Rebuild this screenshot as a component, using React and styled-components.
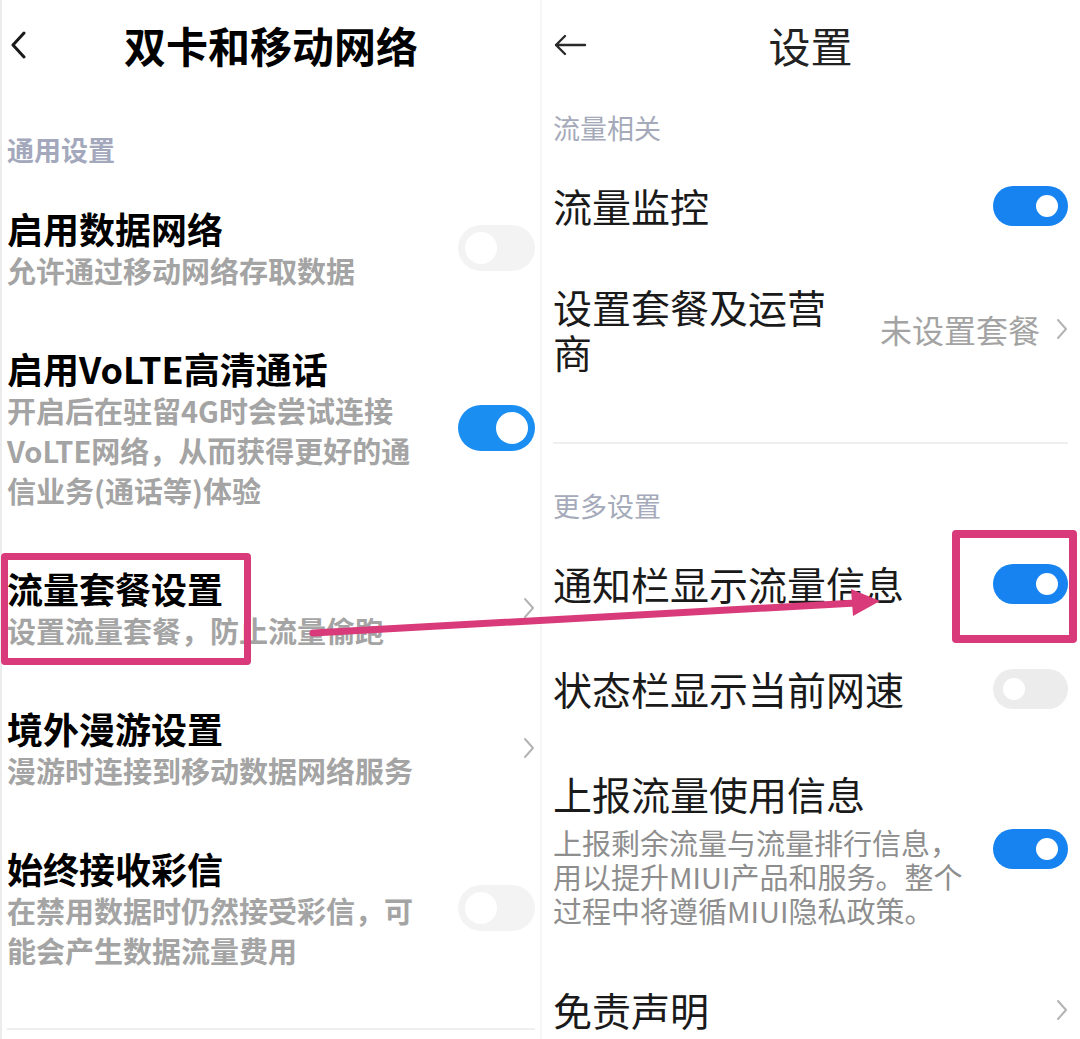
import styled, { createGlobalStyle } from 'styled-components';

const pink = '#d93a7a';

const GlobalStyle = createGlobalStyle`
  html, body {
    margin: 0;
    padding: 0;
    background: #fff;
  }
  body {
    font-family: "Noto Sans CJK SC", "Noto Sans", sans-serif;
  }
`;

const Page = styled.div`
  position: relative;
  display: flex;
  width: 1080px;
  height: 1039px;
  overflow: hidden;
  background: #fff;
`;

const Screen = styled.div`
  width: 540px;
  flex: none;
  box-sizing: border-box;
  padding: ${(p) => (p.$bold ? '0 5px 0 5px' : '0 12px 0 11px')};
  border-left: 2px solid ${(p) => (p.$bold ? '#ececec' : '#f6f6f6')};
  font-weight: ${(p) => (p.$bold ? 700 : 400)};
`;

const Header = styled.div`
  height: 94px;
  box-sizing: border-box;
  padding-bottom: 5px;
  display: grid;
  grid-template-columns: 1fr auto 1fr;
  align-items: center;
`;

const BackButton = styled.div`
  display: flex;
  align-items: center;
  padding-left: ${(p) => p.$offset}px;
`;

const Title = styled.h1`
  margin: 0;
  font-size: 42px;
  line-height: 50px;
  font-weight: inherit;
  color: ${(p) => (p.$bold ? '#000' : '#222')};
`;

const SectionLabel = styled.div`
  margin-top: ${(p) => p.$top}px;
  padding-bottom: ${(p) => p.$bottom}px;
  font-size: 27px;
  line-height: 36px;
  font-weight: ${(p) => (p.$bold ? 700 : 400)};
  color: ${(p) => (p.$bold ? '#a3a8bc' : '#a5aaba')};
`;

const Row = styled.div`
  display: flex;
  align-items: center;
  gap: 16px;
  padding: ${(p) => p.$pad}px 0;
`;

const TextBlock = styled.div`
  flex: 1;
  min-width: 0;
`;

const RowTitle = styled.div`
  white-space: pre-line;
  font-size: ${(p) => (p.$bold ? 36 : 39)}px;
  line-height: ${(p) => (p.$bold ? 44 : 45)}px;
  color: ${(p) => (p.$bold ? '#000' : '#1a1a1a')};
`;

const RowSub = styled.div`
  white-space: pre-line;
  font-size: 29px;
  margin-top: ${(p) => (p.$bold ? 0 : 9)}px;
  line-height: ${(p) => (p.$bold ? 40 : 34)}px;
  font-weight: ${(p) => (p.$bold ? 700 : 400)};
  color: ${(p) => (p.$bold ? '#a4a4a4' : '#8e8e8e')};
`;

const Value = styled.span`
  font-size: 32px;
  line-height: 45px;
  color: #a3a3a3;
`;

const Trailing = styled.div`
  display: flex;
  align-items: center;
  gap: 16px;
  flex: none;
`;

const Switch = styled.span`
  flex: none;
  display: flex;
  align-items: center;
  box-sizing: border-box;
  justify-content: ${(p) => (p.$on ? 'flex-end' : 'flex-start')};
  width: ${(p) => (p.$large ? 77 : 75)}px;
  height: ${(p) => (p.$large ? 46 : 40)}px;
  border-radius: 23px;
  padding: 0 ${(p) => (p.$large ? 7 : 10)}px;
  background: ${(p) =>
    p.$on ? (p.$large ? '#1b8ef2' : '#1683f1') : p.$large ? '#f3f3f3' : '#ececec'};
`;

const Knob = styled.span`
  width: ${(p) => (p.$large ? 32 : 22)}px;
  height: ${(p) => (p.$large ? 32 : 22)}px;
  border-radius: 50%;
  background: #fff;
`;

const Divider = styled.div`
  height: 2px;
  margin-top: ${(p) => p.$top}px;
  background: #efefef;
`;

const Annotation = styled.div`
  position: absolute;
  box-sizing: border-box;
  border: ${(p) => p.$border}px solid ${pink};
  border-radius: 4px;
`;

const ArrowLayer = styled.svg`
  position: absolute;
  left: 0;
  top: 0;
  pointer-events: none;
`;

const Chevron = () => (
  <svg width="12" height="22" viewBox="0 0 12 22">
    <path d="M2 2 L10 11 L2 20" fill="none" stroke="#b3b3b3" strokeWidth="2" strokeLinecap="round" strokeLinejoin="round" />
  </svg>
);

const Toggle = ({ on, large }) => (
  <Switch $on={on} $large={large}>
    <Knob $large={large} />
  </Switch>
);

const leftRows = [
  { title: '启用数据网络', sub: '允许通过移动网络存取数据', toggle: false },
  {
    title: '启用VoLTE高清通话',
    sub: '开启后在驻留4G时会尝试连接\nVoLTE网络，从而获得更好的通\n信业务(通话等)体验',
    toggle: true,
  },
  { title: '流量套餐设置', sub: '设置流量套餐，防止流量偷跑', arrow: true },
  { title: '境外漫游设置', sub: '漫游时连接到移动数据网络服务', arrow: true },
  { title: '始终接收彩信', sub: '在禁用数据时仍然接受彩信，可\n能会产生数据流量费用', toggle: false },
];

const trafficRows = [
  { title: '流量监控', toggle: true },
  { title: '设置套餐及运营\n商', value: '未设置套餐', arrow: true },
];

const moreRows = [
  { title: '通知栏显示流量信息', toggle: true },
  { title: '状态栏显示当前网速', toggle: false },
  {
    title: '上报流量使用信息',
    sub: '上报剩余流量与流量排行信息，\n用以提升MIUI产品和服务。整个\n过程中将遵循MIUI隐私政策。',
    toggle: true,
  },
  { title: '免责声明', arrow: true },
];

const SettingRow = ({ row, bold, pad }) => (
  <Row $pad={pad}>
    <TextBlock>
      <RowTitle $bold={bold}>{row.title}</RowTitle>
      {row.sub && <RowSub $bold={bold}>{row.sub}</RowSub>}
    </TextBlock>
    <Trailing>
      {row.value && <Value>{row.value}</Value>}
      {row.arrow && <Chevron />}
      {row.toggle !== undefined && <Toggle on={row.toggle} large={bold} />}
    </Trailing>
  </Row>
);

const LeftScreen = () => (
  <Screen $bold>
    <Header>
      <BackButton $offset={2}>
        <svg width="18" height="28" viewBox="0 0 18 28">
          <path d="M15 2 L4 14 L15 26" fill="none" stroke="#1a1a1a" strokeWidth="3" strokeLinecap="round" strokeLinejoin="round" />
        </svg>
      </BackButton>
      <Title $bold>双卡和移动网络</Title>
      <span />
    </Header>
    <SectionLabel $bold $top={38} $bottom={10}>通用设置</SectionLabel>
    {leftRows.map((row) => (
      <SettingRow key={row.title} row={row} bold pad={28} />
    ))}
    <Divider $top={30} />
  </Screen>
);

const RightScreen = () => (
  <Screen>
    <Header>
      <BackButton $offset={0}>
        <svg width="34" height="22" viewBox="0 0 34 22">
          <path d="M32 11 H3 M12 2 L3 11 L12 20" fill="none" stroke="#2a2a2a" strokeWidth="2.4" strokeLinecap="round" strokeLinejoin="round" />
        </svg>
      </BackButton>
      <Title>设置</Title>
      <span />
    </Header>
    <SectionLabel $top={16} $bottom={9}>流量相关</SectionLabel>
    {trafficRows.map((row) => (
      <SettingRow key={row.title} row={row} pad={28} />
    ))}
    <Divider $top={40} />
    <SectionLabel $top={44} $bottom={7}>更多设置</SectionLabel>
    {moreRows.map((row) => (
      <SettingRow key={row.title} row={row} pad={30} />
    ))}
  </Screen>
);

export default function App() {
  return (
    <>
      <GlobalStyle />
      <Page>
        <LeftScreen />
        <RightScreen />
        <Annotation $border={7} style={{ left: 1, top: 553, width: 250, height: 112 }} />
        <Annotation $border={8} style={{ left: 952, top: 530, width: 125, height: 113 }} />
        <ArrowLayer width="1080" height="1039" viewBox="0 0 1080 1039">
          <line x1="313" y1="633" x2="856" y2="603" stroke={pink} strokeWidth="7" strokeLinecap="round" />
          <polygon points="880,601 851,589 853,616" fill={pink} />
        </ArrowLayer>
      </Page>
    </>
  );
}
